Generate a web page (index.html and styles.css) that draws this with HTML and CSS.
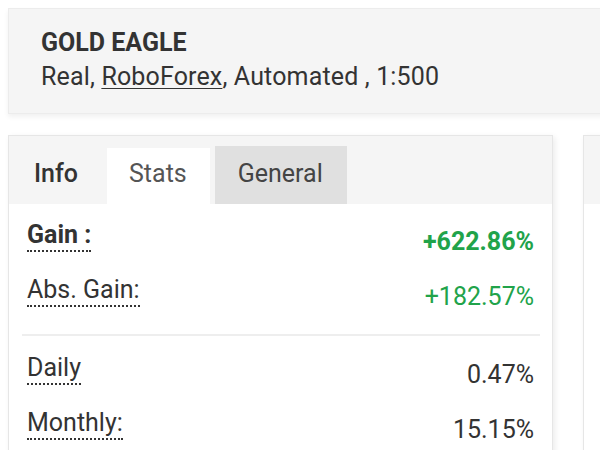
FILE: index.html
```html
<!DOCTYPE html>
<html>
<head>
<meta charset="utf-8">
<link rel="stylesheet" href="styles.css">
</head>
<body>
<div class="page">
  <div class="header-card">
    <div class="title">GOLD EAGLE</div>
    <div class="subtitle">Real, <a class="broker">RoboForex</a>, Automated , 1:500</div>
  </div>
  <div class="columns">
    <div class="card">
      <div class="tabs">
        <div class="tab first">Info</div>
        <div class="tab active">Stats</div>
        <div class="tab hover">General</div>
      </div>
      <div class="content">
        <div class="row">
          <span class="label bold">Gain :</span>
          <span class="value green bold">+622.86%</span>
        </div>
        <div class="row">
          <span class="label">Abs. Gain:</span>
          <span class="value green">+182.57%</span>
        </div>
        <div class="divider"></div>
        <div class="row">
          <span class="label">Daily</span>
          <span class="value">0.47%</span>
        </div>
        <div class="row">
          <span class="label">Monthly:</span>
          <span class="value">15.15%</span>
        </div>
      </div>
    </div>
    <div class="card side">
      <div class="side-bar"></div>
    </div>
  </div>
</div>
</body>
</html>
```
FILE: styles.css
```css
html, body {
  margin: 0;
  padding: 0;
  background: #ffffff;
  overflow: hidden;
  width: 600px;
  height: 450px;
}
body {
  font-family: Roboto, "Liberation Sans", sans-serif;
  color: #333333;
}
.page {
  width: 660px;
  padding: 8px 0 0 8px;
}
.header-card {
  background: #f5f5f5;
  border: 1px solid #ececec;
  box-shadow: 0 3px 5px rgba(0,0,0,0.06);
  padding: 18px 0 20px 32px;
  height: 66px;
}
.title {
  font-weight: 700;
  font-size: 25px;
  line-height: 32px;
  color: #333;
}
.subtitle {
  font-size: 25px;
  line-height: 36px;
  letter-spacing: 0.15px;
  color: #333;
}
.broker {
  text-decoration: underline;
  text-decoration-thickness: 1px;
  text-underline-offset: 3px;
}
.columns {
  display: flex;
  gap: 30px;
  margin-top: 21px;
}
.card {
  width: 543px;
  height: 330px;
  border: 1px solid #e6e6e6;
  box-shadow: 2px 2px 6px rgba(0,0,0,0.08);
  background: #fff;
  flex: none;
}
.card.side {
  width: 100px;
}
.side-bar {
  height: 68px;
  background: #f5f5f5;
}
.tabs {
  display: flex;
  align-items: flex-end;
  background: #f5f5f5;
  height: 68px;
}
.tab {
  font-size: 25px;
  line-height: 52px;
  height: 56px;
  padding: 0 29px 0 25px;
  color: #333;
}
.tab.first {
  font-weight: 500;
}
.tab.active {
  background: #ffffff;
  color: #555;
  padding: 0 23px 0 22px;
  margin-right: 5px;
}
.tab.hover {
  background: #e0e0e0;
  height: 58px;
  line-height: 55px;
  padding: 0 24px 0 23px;
  color: #444;
}
.content {
  padding: 9px 18px 0 18px;
}
.row {
  display: flex;
  justify-content: space-between;
  align-items: center;
  height: 55px;
}
.label {
  font-size: 25px;
  border-bottom: 2px dotted #333;
  line-height: 30px;
  margin-top: -10px;
}
.value {
  font-size: 25px;
  line-height: 26px;
  margin-top: 2px;
}
.bold {
  font-weight: 700;
}
.green {
  color: #21a34a;
}
.divider {
  height: 2px;
  background: #eeeeee;
  margin: 11px -6px 10px -5px;
}
```
